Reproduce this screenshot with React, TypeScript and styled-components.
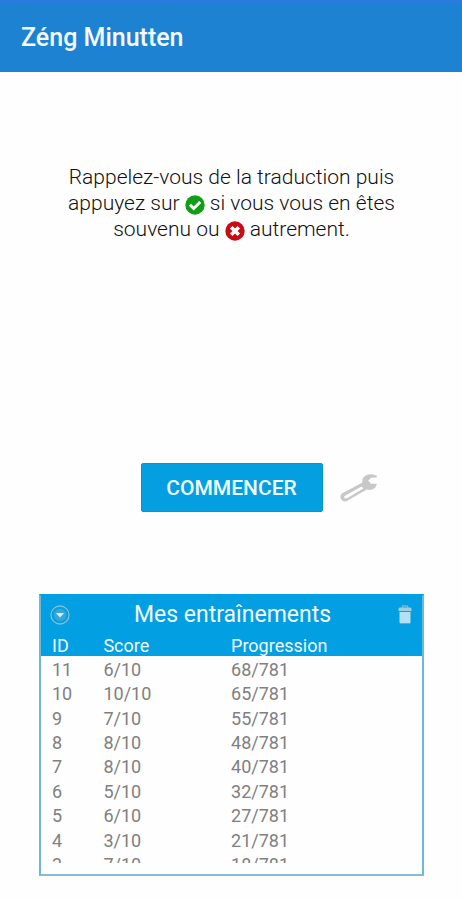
import React from 'react';
import styled, { createGlobalStyle } from 'styled-components';

const GlobalStyle = createGlobalStyle`
  *, *::before, *::after { box-sizing: border-box; }
  body { margin: 0; background: #fefefe; font-family: Roboto, "Liberation Sans", sans-serif; color: #111; }
`;

const Page = styled.div`
  min-height: 100vh;
  display: flex;
  flex-direction: column;
`;

const AppBar = styled.header`
  display: flex;
  align-items: center;
  height: 72px;
  padding: 0 21px;
  background: #1e82d2;
  border-top: 4px solid #2a7be0;
`;

const AppTitle = styled.h1`
  margin: 0;
  font-size: 25px;
  line-height: 32px;
  font-weight: 500;
  color: #f4faff;
`;

const Main = styled.main`
  display: flex;
  flex-direction: column;
  padding: 92px 38px 24px 39px;
`;

const Instructions = styled.p`
  margin: 0 auto;
  max-width: 344px;
  font-size: 21px;
  line-height: 26px;
  font-weight: 300;
  text-align: center;
`;

const InlineIcon = styled.svg`
  width: 20px;
  height: 20px;
  vertical-align: -5px;
`;

const Actions = styled.div`
  display: grid;
  grid-template-columns: 1fr 182px 1fr;
  align-items: center;
  column-gap: 17px;
  margin: 221px 0 82px;
`;

const StartButton = styled.button`
  grid-column: 2;
  height: 49px;
  padding: 0;
  border: 1px solid #0794d4;
  border-radius: 2px;
  background: #049fe1;
  color: #f2fbff;
  font: 500 21px/24px Roboto, "Liberation Sans", sans-serif;
  cursor: pointer;
`;

const IconButton = styled.button`
  display: flex;
  justify-self: start;
  padding: 0;
  border: 0;
  background: none;
  cursor: pointer;
`;

const Panel = styled.section`
  border: 2px solid #029fe2;
  border-color: #029fe2 #6ab9d8 #86bdd6;
  padding-bottom: 11px;
`;

const PanelBar = styled.div`
  display: grid;
  grid-template-columns: 20px 1fr 20px;
  align-items: center;
  height: 38px;
  padding: 0 7px 0 9px;
  background: #029fe2;
`;

const PanelTitle = styled.h2`
  margin: 0;
  font-size: 23px;
  line-height: 32px;
  font-weight: 400;
  text-align: center;
  color: #f0faff;
`;

const Scroller = styled.div`
  height: 229px;
  overflow: hidden;
`;

const Table = styled.table`
  width: 100%;
  height: 242px;
  table-layout: fixed;
  border-collapse: collapse;
  font-size: 18px;
  line-height: 20px;
`;

const HeadCell = styled.th<{ $width?: string }>`
  height: 22px;
  width: ${({ $width }) => $width ?? 'auto'};
  padding: 2px 0 0 11px;
  background: #029fe2;
  color: #f0faff;
  font-weight: 400;
  text-align: left;
`;

const Cell = styled.td`
  padding: 3px 0 0 11px;
  color: #808080;
`;

const trainings = [
  ['11', '6/10', '68/781'],
  ['10', '10/10', '65/781'],
  ['9', '7/10', '55/781'],
  ['8', '8/10', '48/781'],
  ['7', '8/10', '40/781'],
  ['6', '5/10', '32/781'],
  ['5', '6/10', '27/781'],
  ['4', '3/10', '21/781'],
  ['3', '7/10', '18/781'],
];

const CheckIcon = () => (
  <InlineIcon viewBox="0 0 20 20" role="img" aria-label="correct">
    <circle cx="10" cy="10" r="9.7" fill="#109e16" />
    <path d="M5 9.8l3.7 3.7L15.2 7" fill="none" stroke="#fff" strokeWidth="3" />
  </InlineIcon>
);

const CrossIcon = () => (
  <InlineIcon viewBox="0 0 20 20" role="img" aria-label="incorrect">
    <circle cx="10" cy="10" r="9.7" fill="#c60c14" />
    <path d="M6.2 6.2l7.6 7.6M13.8 6.2l-7.6 7.6" fill="none" stroke="#fff" strokeWidth="3.6" />
  </InlineIcon>
);

const WrenchIcon = () => (
  <svg width="38" height="30" viewBox="0 0 38 30" aria-hidden="true">
    <path
      fill="#c8c8c8"
      fillRule="evenodd"
      d="M36.7 2.6 32 1.2Q25.5.8 23 5 22 7 22.4 9.4L2.4 20.3Q-.6 22.4 .8 25.7 2.8 29.4 6.8 28L26.8 16.4Q32 18 35.4 14.4L37 10.8 31 10.8 28.3 7.4 31.2 4.8 36.7 4.6ZM21.6 13.4 23.4 15.6 7.4 25Q4.9 26 4.2 24.5 3.9 23.2 5.3 22.4Z"
    />
  </svg>
);

const ExpandIcon = () => (
  <svg width="20" height="20" viewBox="0 0 20 20" aria-hidden="true">
    <circle cx="10" cy="10" r="9" fill="none" stroke="#86bdd4" strokeWidth="1.3" />
    <circle cx="10" cy="10" r="6.2" fill="#36a7d8" />
    <path d="M5.8 8h8.4L10 12.6z" fill="#d5f1fb" />
  </svg>
);

const TrashIcon = () => (
  <svg width="20" height="22" viewBox="0 0 20 22" aria-hidden="true">
    <path d="M7.5 4V2h5v2" fill="none" stroke="#79b3cb" strokeWidth="1.4" />
    <path d="M3.5 5q0-1.5 1.5-1.5h10q1.5 0 1.5 1.5v2h-13z" fill="#9acfe4" />
    <path d="M4.5 8h11v10q0 2-2 2h-7q-2 0-2-2z" fill="#b4e0f3" />
    <path d="M3.5 7.5h13M5.5 19.8h9" stroke="#3e93b4" strokeWidth="1" />
  </svg>
);

export default function App() {
  return (
    <Page>
      <GlobalStyle />
      <AppBar>
        <AppTitle>Zéng Minutten</AppTitle>
      </AppBar>
      <Main>
        <Instructions>
          Rappelez-vous de la traduction puis appuyez sur <CheckIcon /> si vous vous en êtes
          souvenu ou <CrossIcon /> autrement.
        </Instructions>
        <Actions>
          <StartButton type="button">COMMENCER</StartButton>
          <IconButton type="button" aria-label="Réglages">
            <WrenchIcon />
          </IconButton>
        </Actions>
        <Panel aria-labelledby="trainings-title">
          <PanelBar>
            <IconButton type="button" aria-label="Réduire">
              <ExpandIcon />
            </IconButton>
            <PanelTitle id="trainings-title">Mes entraînements</PanelTitle>
            <IconButton type="button" aria-label="Supprimer">
              <TrashIcon />
            </IconButton>
          </PanelBar>
          <Scroller>
            <Table aria-labelledby="trainings-title">
              <thead>
                <tr>
                  <HeadCell scope="col" $width="13.5%">ID</HeadCell>
                  <HeadCell scope="col" $width="33.5%">Score</HeadCell>
                  <HeadCell scope="col">Progression</HeadCell>
                </tr>
              </thead>
              <tbody>
                {trainings.map(([id, score, progress]) => (
                  <tr key={id}>
                    <Cell>{id}</Cell>
                    <Cell>{score}</Cell>
                    <Cell>{progress}</Cell>
                  </tr>
                ))}
              </tbody>
            </Table>
          </Scroller>
        </Panel>
      </Main>
    </Page>
  );
}
